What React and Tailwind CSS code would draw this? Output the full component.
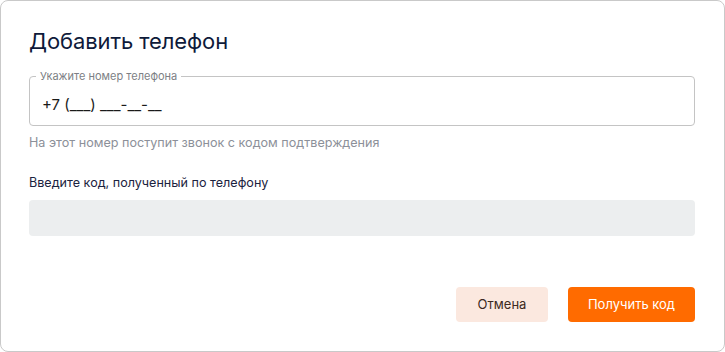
import React from 'react';

const font = { fontFamily: 'Inter, "Noto Sans", sans-serif' };

export default function App() {
  return (
    <div className="w-[725px] h-[352px] bg-white" style={font}>
      <div className="h-full border border-[#c9c9c9] rounded-[8px] pl-[28px] pr-[29px] pt-[24px] flex flex-col">
        <h2 className="text-[22px] leading-[32px] font-normal text-[#0e1a3a] tracking-[-0.1px]">Добавить телефон</h2>

        <fieldset className="mt-[13px] h-[56px] border border-[#c4c4c4] rounded-[4px] px-[12px]">
          <legend className="px-[4px] ml-[-6px] text-[11px] leading-[12px] text-[#7d7f85]">Укажите номер телефона</legend>
          <div className="text-[15px] leading-[20px] text-[#1a1a1a] pt-[13px]">+7 (___) ___-__-__</div>
        </fieldset>

        <p className="mt-[8px] text-[12.6px] leading-[18px] text-[#8c9099]">На этот номер поступит звонок с кодом подтверждения</p>

        <label className="mt-[22px] text-[12.6px] leading-[18px] text-[#1b2340]">Введите код, полученный по телефону</label>
        <div className="mt-[8px] h-[36px] rounded-[4px] bg-[#eceeef]" />

        <div className="mt-auto mb-[29px] flex justify-end gap-[20px]">
          <button className="w-[92px] h-[35px] rounded-[4px] bg-[#fbe8df] text-[13px] text-[#3d2a22]">Отмена</button>
          <button className="w-[127px] h-[35px] rounded-[4px] bg-[#ff6b00] text-[13px] text-white">Получить код</button>
        </div>
      </div>
    </div>
  );
}
